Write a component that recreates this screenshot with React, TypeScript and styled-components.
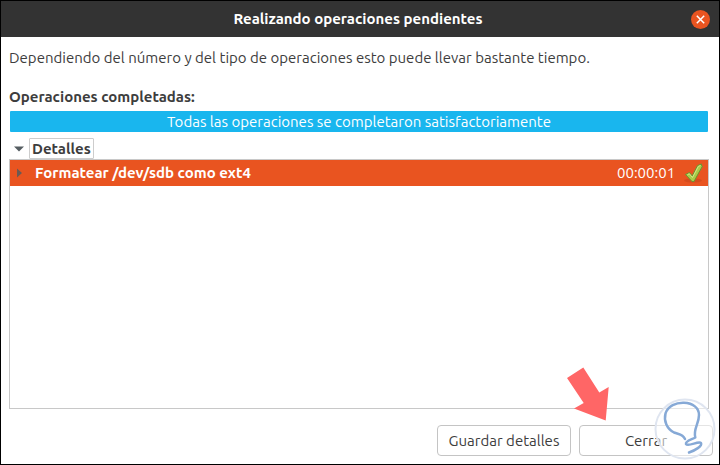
import React, { useState } from "react";
import styled, { createGlobalStyle } from "styled-components";

const GlobalStyle = createGlobalStyle`
  *, *::before, *::after { box-sizing: border-box; }
  body {
    margin: 0;
    background: #fff;
    color: #3d3d3d;
    font-family: Ubuntu, "Noto Sans", sans-serif;
    font-size: 15px;
    line-height: 20px;
  }
  button { font: inherit; color: inherit; cursor: pointer; }
`;

const Dialog = styled.main`
  display: flex;
  flex-direction: column;
  min-height: 100vh;
  border: 1px solid #000;
  background: #fff;
`;

const TitleBar = styled.header`
  display: grid;
  grid-template-columns: 1fr auto 1fr;
  align-items: center;
  height: 36px;
  padding: 0 9px 0 5px;
  background: #333;
  color: #fff;
`;

const Title = styled.h1`
  grid-column: 2;
  margin: 0;
  font-size: 15px;
  font-weight: 700;
`;

const CloseButton = styled.button`
  justify-self: end;
  display: flex;
  align-items: center;
  justify-content: center;
  width: 19px;
  height: 19px;
  padding: 0;
  border: 0;
  border-radius: 50%;
  background: #e95420;
  color: #fff;
`;

const Content = styled.section`
  flex: 1;
  display: flex;
  flex-direction: column;
  padding: 11px 10px 8px 8px;
`;

const Intro = styled.p`
  margin: 0 0 19px;
`;

const SectionLabel = styled.h2`
  margin: 0 0 4px;
  font-size: 15px;
  font-weight: 700;
`;

const ProgressBar = styled.div`
  height: 21px;
  margin: 0 1px;
  border-radius: 1px;
  background: #19b6ee;
  color: #fff;
  line-height: 21px;
  text-align: center;
`;

const Expander = styled.button`
  display: flex;
  align-items: center;
  align-self: flex-start;
  gap: 4px;
  height: 21px;
  margin-top: 6px;
  padding: 0 0 0 4px;
  border: 0;
  background: transparent;
  font-weight: 700;
`;

const ExpanderText = styled.span`
  height: 21px;
  padding: 0 2px;
  border: 1px solid #cdcdcd;
  border-radius: 1px;
  line-height: 19px;
`;

const ListFrame = styled.div`
  flex: 1;
  border: 1px solid #c8c8c8;
`;

const OperationTable = styled.table`
  width: 100%;
  border-collapse: collapse;
`;

const OperationRow = styled.tr`
  height: 26px;
  background: #e95420;
  color: #fff;
`;

const Cell = styled.td<{ $width?: number }>`
  width: ${({ $width }) => ($width ? `${$width}px` : "auto")};
  padding: 0;
  white-space: nowrap;
`;

const RowToggle = styled.button`
  display: flex;
  align-items: center;
  gap: 10px;
  padding: 0 0 0 3px;
  border: 0;
  background: transparent;
  font-weight: 700;
`;

const Footer = styled.footer`
  position: relative;
  display: flex;
  justify-content: flex-end;
  gap: 8px;
  padding: 8px 6px 8px 8px;
`;

const ActionButton = styled.button`
  min-width: 134px;
  height: 31px;
  padding: 0 10px;
  border: 1px solid #c4c4c4;
  border-radius: 4px;
  background: #fff;
`;

const PointerArrow = styled.svg`
  position: absolute;
  right: 109px;
  bottom: 43px;
  pointer-events: none;
`;

const Watermark = styled.svg`
  position: absolute;
  right: 3px;
  bottom: 4px;
  pointer-events: none;
`;

function TriangleIcon({ down = false, color }: { down?: boolean; color: string }) {
  return (
    <svg width="12" height="12" viewBox="0 0 12 12" aria-hidden="true">
      <path d={down ? "M1 3.500h10L6 8.500z" : "M4 1.500v9L9 6z"} fill={color} />
    </svg>
  );
}

const StatusIcon = styled.svg`
  display: block;
`;

function CheckIcon() {
  return (
    <StatusIcon width="22" height="22" viewBox="0 0 22 22" role="img" aria-label="Completada">
      <ellipse cx="10" cy="18.500" rx="9" ry="2" fill="#a83c16" opacity=".3" />
      <path
        d="M2.500 12.500L6.500 10.500L9.200 14L14.500 3.500L18.500 2L18.300 3.500L19.500 4L11 19.500H9z"
        fill="#aacb48"
        stroke="#6b9430"
        strokeWidth="1"
        strokeLinejoin="round"
      />
      <path d="M4.500 12.800L6.300 11.800L9.500 15.500L15.300 4.500L17.500 3.500" fill="none" stroke="#d3e68a" strokeWidth="1" />
    </StatusIcon>
  );
}

export default function App() {
  const [showDetails, setShowDetails] = useState(true);
  const [rowOpen, setRowOpen] = useState(false);

  return (
    <>
      <GlobalStyle />
      <Dialog>
        <TitleBar>
          <Title>Realizando operaciones pendientes</Title>
          <CloseButton type="button" aria-label="Cerrar ventana">
            <svg width="9" height="9" viewBox="0 0 9 9" aria-hidden="true">
              <path d="M.8.8l7.400 7.400M8.200.8L.8 8.200" stroke="currentColor" strokeWidth="1.500" />
            </svg>
          </CloseButton>
        </TitleBar>
        <Content>
          <Intro>Dependiendo del número y del tipo de operaciones esto puede llevar bastante tiempo.</Intro>
          <SectionLabel id="completed">Operaciones completadas:</SectionLabel>
          <ProgressBar role="progressbar" aria-labelledby="completed" aria-valuenow={100}>
            Todas las operaciones se completaron satisfactoriamente
          </ProgressBar>
          <Expander type="button" aria-expanded={showDetails} onClick={() => setShowDetails(!showDetails)}>
            <TriangleIcon down={showDetails} color="#555d61" />
            <ExpanderText>Detalles</ExpanderText>
          </Expander>
          {showDetails && (
            <ListFrame>
              <OperationTable aria-label="Operaciones">
                <tbody>
                  <OperationRow>
                    <Cell>
                      <RowToggle type="button" aria-expanded={rowOpen} onClick={() => setRowOpen(!rowOpen)}>
                        <TriangleIcon down={rowOpen} color="#6b5a54" />
                        Formatear /dev/sdb como ext4
                      </RowToggle>
                    </Cell>
                    <Cell $width={66}>00:00:01</Cell>
                    <Cell $width={25}>
                      <CheckIcon />
                    </Cell>
                  </OperationRow>
                </tbody>
              </OperationTable>
            </ListFrame>
          )}
        </Content>
        <Footer>
          <ActionButton type="button">Guardar detalles</ActionButton>
          <ActionButton type="button">Cerrar</ActionButton>
          <PointerArrow width="44" height="55" viewBox="0 0 44 55" aria-hidden="true">
            <path d="M1 12L17.300 1.500L33.300 26.500L42.700 21L39.700 54.500L8 42.500L17.700 37z" fill="#ff6666" />
          </PointerArrow>
          <Watermark width="62" height="62" viewBox="0 0 62 62" aria-hidden="true">
            <circle cx="31" cy="31" r="29.500" fill="#fff" fillOpacity=".55" stroke="#dfe5f0" strokeWidth="2" />
            <path
              d="M31 41C28.500 35.500 25 36.500 20 34.500C13 31 9.500 23 11.500 15.500C14 8 22 4.500 30 4.800C39 5 45 10 45 17C45 26 39 31 41.300 39.500C38 41.500 31 43 32 46C34 49 45 42.500 47 45C48.500 48 41 52.500 35 54.500"
              fill="none"
              stroke="#86a9d6"
              strokeWidth="2.500"
              strokeLinecap="round"
              strokeLinejoin="round"
            />
          </Watermark>
        </Footer>
      </Dialog>
    </>
  );
}
